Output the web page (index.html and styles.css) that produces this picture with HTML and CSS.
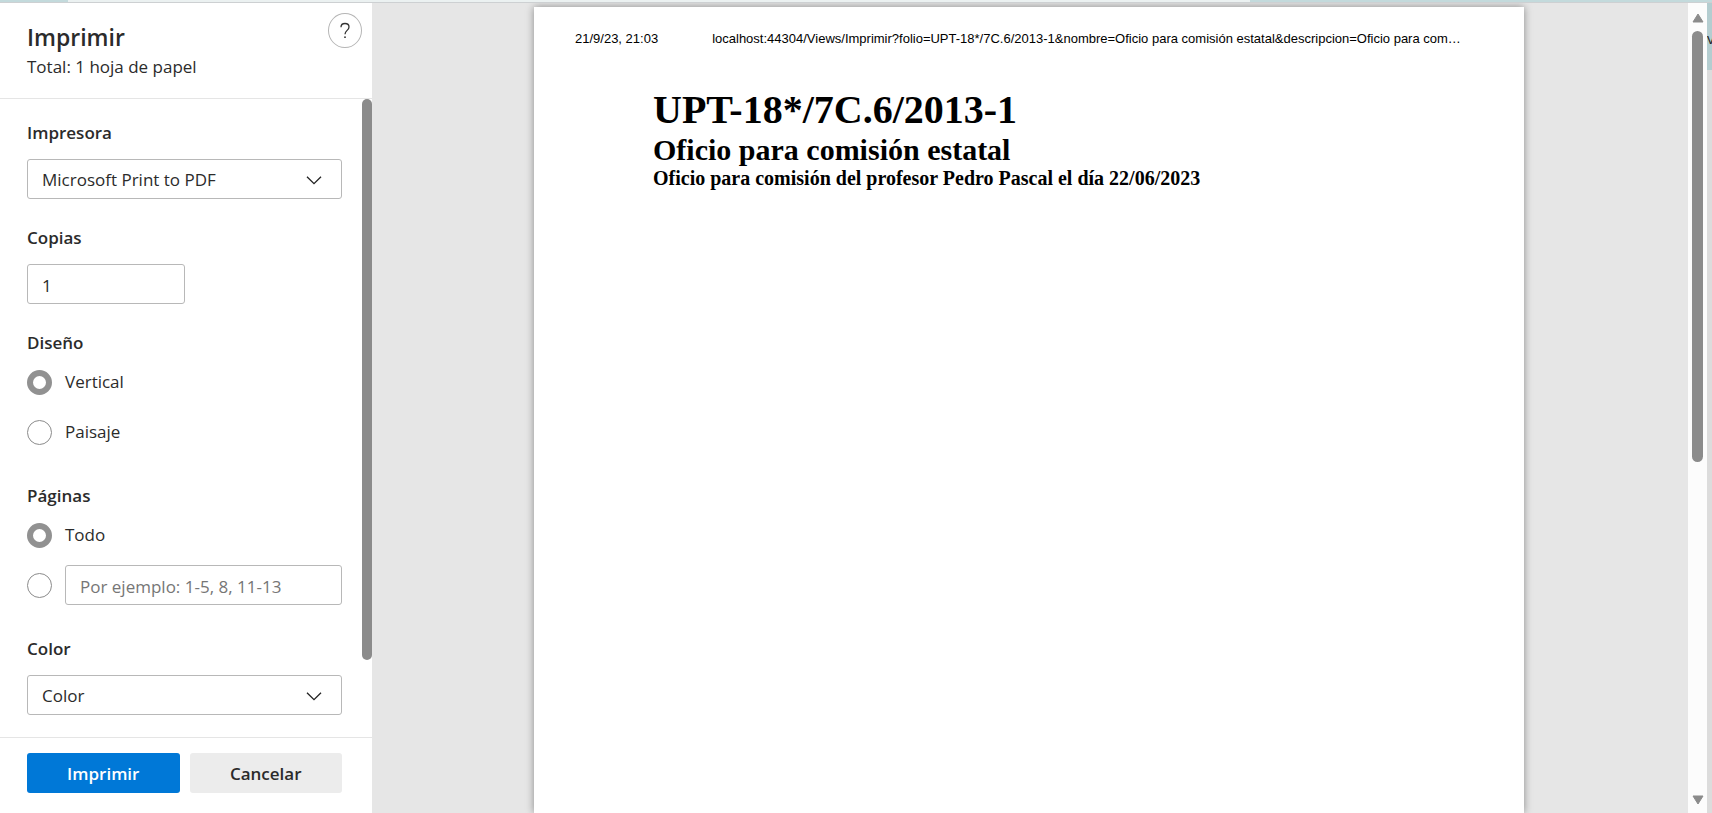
FILE: index.html
```html
<!DOCTYPE html>
<html lang="es">
<head>
<meta charset="utf-8">
<title>Imprimir</title>
<link rel="stylesheet" href="styles.css">
</head>
<body>
<div class="window">
  <div class="tabstrip"><div class="tabstrip-active"></div></div>
  <div class="window-body">
    <main class="dialog">
      <form class="settings">
        <header class="settings-header">
          <div>
            <h1 class="title">Imprimir</h1>
            <p class="subtitle">Total: 1 hoja de papel</p>
          </div>
          <button class="help" type="button" aria-label="Ayuda">
            <svg class="help-icon" viewBox="0 0 12 18" aria-hidden="true"><path d="M2 5.2C2 2.8 3.6 1.5 6 1.5s4 1.4 4 3.5c0 3.4-4 3.4-4 7.3" fill="none" stroke="#333" stroke-width="1.3"/><circle cx="6" cy="15.2" r="0.9" fill="#333"/></svg>
          </button>
        </header>
        <div class="settings-scroll">
          <div class="fields">
            <div class="field">
              <label class="label" for="printer">Impresora</label>
              <div class="select-wrap">
                <select class="box" id="printer"><option>Microsoft Print to PDF</option></select>
                <svg class="chevron" viewBox="0 0 16 10" aria-hidden="true"><path d="M1 1.7l7 7 7-7" fill="none" stroke="#222" stroke-width="1.3"/></svg>
              </div>
            </div>
            <div class="field">
              <label class="label" for="copies">Copias</label>
              <input class="box copies" id="copies" type="text" inputmode="numeric" value="1">
            </div>
            <fieldset class="field choices">
              <legend class="label">Diseño</legend>
              <label class="choice"><input class="radio" type="radio" name="layout" checked>Vertical</label>
              <label class="choice"><input class="radio" type="radio" name="layout">Paisaje</label>
            </fieldset>
            <fieldset class="field choices">
              <legend class="label">Páginas</legend>
              <label class="choice"><input class="radio" type="radio" name="pages" checked>Todo</label>
              <div class="choice">
                <input class="radio" type="radio" name="pages" aria-label="Intervalo de páginas">
                <input class="box" type="text" placeholder="Por ejemplo: 1-5, 8, 11-13" aria-label="Páginas">
              </div>
            </fieldset>
            <div class="field">
              <label class="label" for="color">Color</label>
              <div class="select-wrap">
                <select class="box" id="color"><option>Color</option></select>
                <svg class="chevron" viewBox="0 0 16 10" aria-hidden="true"><path d="M1 1.7l7 7 7-7" fill="none" stroke="#222" stroke-width="1.3"/></svg>
              </div>
            </div>
          </div>
          <div class="settings-bar"><div class="settings-thumb"></div></div>
        </div>
        <footer class="actions">
          <button class="button primary" type="submit">Imprimir</button>
          <button class="button" type="button">Cancelar</button>
        </footer>
      </form>
      <section class="preview">
        <article class="sheet">
          <div class="sheet-header">
            <span>21/9/23, 21:03</span>
            <span class="sheet-url">localhost:44304/Views/Imprimir?folio=UPT-18*/7C.6/2013-1&amp;nombre=Oficio para comisión estatal&amp;descripcion=Oficio para com…</span>
          </div>
          <div class="document">
            <h1 class="folio">UPT-18*/7C.6/2013-1</h1>
            <h2 class="name">Oficio para comisión estatal</h2>
            <h3 class="description">Oficio para comisión del profesor Pedro Pascal el día 22/06/2023</h3>
          </div>
        </article>
      </section>
      <div class="preview-bar">
        <svg class="arrow" viewBox="0 0 12 10" aria-hidden="true"><path d="M6 1L11 9H1z" fill="#8b8b8b" stroke="#8b8b8b" stroke-linejoin="round"/></svg>
        <div class="preview-track"><div class="preview-thumb"></div></div>
        <svg class="arrow" viewBox="0 0 12 10" aria-hidden="true"><path d="M1 1h10L6 9z" fill="#8b8b8b" stroke="#8b8b8b" stroke-linejoin="round"/></svg>
      </div>
    </main>
    <aside class="behind"><div class="behind-bar">v</div></aside>
  </div>
</div>
</body>
</html>
```
FILE: styles.css
```css
* { box-sizing: border-box; }
body { margin: 0; font-family: "Open Sans", "Noto Sans", sans-serif; font-size: 17px; line-height: 24px; color: #2b2b2b; }
h1, h2, h3, p, fieldset { margin: 0; padding: 0; border: 0; }
.window { display: flex; flex-direction: column; height: 100vh; overflow: hidden; }

.tabstrip { flex: none; height: 3px; padding: 0 27% 0 4%; background: #c3dadc; border-bottom: 1px solid #cdd0d2; }
.tabstrip-active { height: 2px; background: #ebf1f1; }
.window-body { flex: 1; display: flex; min-height: 0; }
.dialog { flex: 1; display: flex; min-width: 0; background: #e6e6e6; }
.behind { flex: none; width: 5px; overflow: hidden; background: #dcdcdc; }
.behind-bar { height: 67px; padding-top: 23px; background: #b4cdd0; font-size: 15px; color: #222; }

.settings { flex: none; width: 372px; display: flex; flex-direction: column; background: #fff; }
.settings-header { display: flex; justify-content: space-between; height: 96px; padding: 10px 10px 0 27px; border-bottom: 1px solid #e5e5e5; }
.title { padding-top: 8px; font-size: 23px; line-height: 32px; font-weight: 600; }
.subtitle { line-height: 28px; }
.help { display: flex; align-items: center; justify-content: center; width: 34px; height: 35px; padding: 0; border: 1px solid #b5b5b5; border-radius: 50%; background: #fff; }
.help-icon { width: 12px; height: 18px; }

.settings-scroll { flex: 1; display: flex; min-height: 0; }
.fields { flex: 1; display: flex; flex-direction: column; gap: 27px; padding: 22px 20px 0 27px; overflow: hidden; }
.settings-bar { flex: none; width: 10px; }
.settings-thumb { height: 88%; border-radius: 5px; background: #8b8b8b; }

.field { display: flex; flex-direction: column; gap: 14px; min-width: 0; }
.label { padding: 0; font-weight: 600; }
.box { width: 100%; height: 40px; padding: 2px 14px 0; border: 1px solid #b8b8b8; border-radius: 3px; background: #fff; color: inherit; font: inherit; appearance: none; }
.box::placeholder { color: #767676; opacity: 1; }
.copies { width: 50%; }
.select-wrap { display: grid; align-items: center; }
.select-wrap > * { grid-area: 1 / 1; }
.chevron { width: 16px; height: 10px; margin-top: 2px; margin-right: 20px; justify-self: end; pointer-events: none; }
.choices { gap: 10px; margin-bottom: 5px; }
.choices .label { margin-bottom: 7px; }
.choice { display: flex; align-items: center; gap: 13px; height: 40px; }
.radio { flex: none; width: 25px; height: 25px; margin: 0; border: 1px solid #8b8b8b; border-radius: 50%; background: #fff; appearance: none; }
.radio:checked { border: 6px solid #919191; }

.actions { display: grid; grid-template-columns: 1fr 1fr; gap: 10px; padding: 15px 30px 20px 27px; border-top: 1px solid #e5e5e5; }
.button { height: 40px; padding: 2px 0 0; border: 0; border-radius: 3px; background: #ececec; color: #2b2b2b; font: inherit; font-weight: 600; }
.primary { background: #0078d7; color: #fff; }

.preview { flex: 1; display: flex; justify-content: center; min-width: 0; padding: 4px 2px 0 0; overflow: hidden; }
.sheet { width: 990px; background: #fff; box-shadow: 0 0 8px rgba(0, 0, 0, 0.4); color: #000; }
.sheet-header { display: flex; gap: 54px; padding: 22px 41px 0; font-family: "Liberation Sans", Arial, sans-serif; font-size: 13px; line-height: 20px; white-space: nowrap; }
.document { padding: 38px 119px 0; font-family: "Liberation Serif", "Times New Roman", serif; }
.folio { font-size: 40px; line-height: 46px; }
.name { font-size: 30px; line-height: 33px; }
.description { font-size: 20px; line-height: 24px; }

.preview-bar { flex: none; display: flex; flex-direction: column; align-items: center; gap: 8px; width: 19px; padding: 10px 0 8px; background: #fcfcfc; }
.arrow { flex: none; width: 12px; height: 10px; }
.preview-track { flex: 1; }
.preview-thumb { width: 11px; height: 57%; border-radius: 6px; background: #8b8b8b; }
```
